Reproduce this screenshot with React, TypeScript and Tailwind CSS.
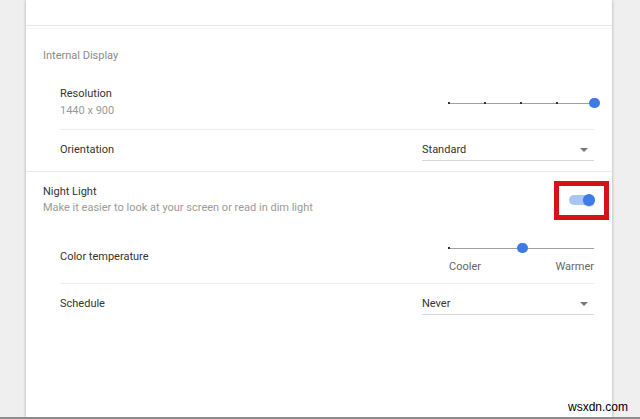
import { ReactNode } from 'react'

const font = { fontFamily: 'Roboto, "Noto Sans", sans-serif' }

function Slider({ value, ticks = [] as number[] }: { value: number; ticks?: number[] }) {
  return (
    <div className="relative w-[145px] h-[10px] flex items-center">
      <div className="w-full h-px bg-[#a0a0a0]" />
      {ticks.map((t) => (
        <div
          key={t}
          className="absolute top-[4px] w-[2px] h-[2px] bg-[#333]"
          style={{ left: `${t - 1}px` }}
        />
      ))}
      <div
        className="absolute top-0 w-[11px] h-[10px] -ml-[5px] rounded-full bg-[#3d7ae6]"
        style={{ left: `${value}px` }}
      />
    </div>
  )
}

function Dropdown({ label }: { label: string }) {
  return (
    <div className="w-[172px] h-[21px] flex items-center justify-between border-b border-[#d6d6d6] pr-[6px]">
      <span className="text-[11px] text-[#333]">{label}</span>
      <span className="w-0 h-0 border-l-[4px] border-r-[4px] border-t-[4px] border-l-transparent border-r-transparent border-t-[#777]" />
    </div>
  )
}

function Row({ children, divider = false, className = '' }: { children: ReactNode; divider?: boolean; className?: string }) {
  return (
    <div className={`flex justify-between ${divider ? 'border-b border-[#ececec]' : ''} ${className}`}>
      {children}
    </div>
  )
}

export default function App() {
  return (
    <div className="relative w-[640px] h-[419px] bg-[#efefef] flex flex-col overflow-hidden" style={font}>
      <div className="flex flex-1 min-h-0">
        <div className="w-[26px]" />
        <div className="w-[586px] bg-white shadow-[0_0_3px_rgba(0,0,0,0.3)] flex flex-col">
          {/* header spacer */}
          <div className="h-[26px] border-b border-[#e6e6e6]" />
          <div className="h-[3px] border-b border-[#f3f3f3]" />

          <div className="h-[53px] flex items-center pl-[17px] pt-[2px] text-[11px] text-[#8a8a8a]">
            Internal Display
          </div>

          <div className="pl-[34px] pr-[18px] border-b border-[#e9e9e9]">
            <Row divider className="h-[48px] items-start">
              <div className="pt-[3px] text-[11px] leading-[17px]">
                <div className="text-[#333]">Resolution</div>
                <div className="text-[#9a9a9a]">1440 x 900</div>
              </div>
              <div className="mt-[16px]">
                <Slider value={145} ticks={[0, 36, 72, 108]} />
              </div>
            </Row>
            <Row className="h-[41px] items-center">
              <span className="text-[11px] text-[#333]">Orientation</span>
              <Dropdown label="Standard" />
            </Row>
          </div>

          <div className="h-[56px] flex items-center justify-between pl-[17px] pr-[18px]">
            <div className="text-[11px] leading-[16px]">
              <div className="text-[#333]">Night Light</div>
              <div className="text-[#9a9a9a]">Make it easier to look at your screen or read in dim light</div>
            </div>
            <div className="-mr-[15px] w-[55px] h-[39px] border-[5px] border-[#d4121c] flex items-center justify-center">
              <div className="relative w-[26px] h-[12px] flex items-center">
                <div className="w-[22px] h-[10px] rounded-full bg-[#a9c5f5]" />
                <div className="absolute right-0 top-0 w-[12px] h-[12px] rounded-full bg-[#3d7ae6] shadow-[0_1px_1px_rgba(0,0,0,0.2)]" />
              </div>
            </div>
          </div>

          <div className="pl-[34px] pr-[18px]">
            <Row divider className="h-[56px] items-center">
              <span className="pt-[3px] text-[11px] text-[#333]">Color temperature</span>
              <div className="self-start mt-[15px] flex flex-col">
                <Slider value={73} ticks={[0]} />
                <div className="flex justify-between text-[11px] leading-[16px] text-[#666] mt-[6px]">
                  <span>Cooler</span>
                  <span>Warmer</span>
                </div>
              </div>
            </Row>
            <Row className="h-[40px] items-center pt-[1px]">
              <span className="text-[11px] text-[#333]">Schedule</span>
              <Dropdown label="Never" />
            </Row>
          </div>
        </div>
        <div className="flex-1" />
      </div>
      <div className="h-[2px] bg-[#8c8c8c]" />

      <span
        className="absolute right-[12px] bottom-[3px] text-[12px] text-black"
        style={{ fontFamily: '"Liberation Sans", Arial, sans-serif' }}
      >
        wsxdn.com
      </span>
    </div>
  )
}
